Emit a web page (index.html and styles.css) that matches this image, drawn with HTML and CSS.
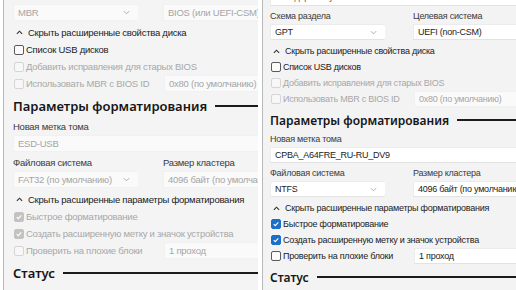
FILE: index.html
```html
<!DOCTYPE html>
<html lang="ru">

<head>
    <meta charset="UTF-8">
    <meta name="viewport" content="width=device-width, initial-scale=1.0">
    <title>Rufus</title>
    <link rel="stylesheet" href="styles.css">
</head>

<body>
    <div class="compare">
        <!-- left window: drive properties disabled -->
        <section class="panel panel-old">
            <div class="row fields">
                <div class="select off"><span>MBR</span><svg class="chev" viewBox="0 0 8 5"><path d="M1 1l3 3 3-3" /></svg></div>
                <div class="field off">BIOS (или UEFI-CSM)</div>
            </div>
            <div class="toggle"><svg class="up" viewBox="0 0 8 5"><path d="M1 4l3-3 3 3" /></svg>Скрыть расширенные свойства диска</div>
            <div class="check"><span class="box"></span>Список USB дисков</div>
            <div class="check off"><span class="box"></span>Добавить исправления для старых BIOS</div>
            <div class="row">
                <div class="check off"><span class="box"></span>Использовать MBR с BIOS ID</div>
                <div class="field off">0x80 (по умолчанию)</div>
            </div>

            <h2 class="section">Параметры форматирования</h2>
            <div class="label">Новая метка тома</div>
            <div class="field wide off">ESD-USB</div>
            <div class="row labels">
                <div class="label">Файловая система</div>
                <div class="label">Размер кластера</div>
            </div>
            <div class="row fields">
                <div class="select off"><span>FAT32 (по умолчанию)</span><svg class="chev" viewBox="0 0 8 5"><path d="M1 1l3 3 3-3" /></svg></div>
                <div class="field off">4096 байт (по умолчанию)</div>
            </div>
            <div class="toggle"><svg class="up" viewBox="0 0 8 5"><path d="M1 4l3-3 3 3" /></svg>Скрыть расширенные параметры форматирования</div>
            <div class="check off on"><span class="box"><svg viewBox="0 0 10 10"><path d="M2.2 5.2l1.9 1.9 3.8-4" /></svg></span>Быстрое форматирование</div>
            <div class="check off on"><span class="box"><svg viewBox="0 0 10 10"><path d="M2.2 5.2l1.9 1.9 3.8-4" /></svg></span>Создать расширенную метку и значок устройства</div>
            <div class="row">
                <div class="check off"><span class="box"></span>Проверить на плохие блоки</div>
                <div class="field off">1 проход</div>
            </div>

            <h2 class="section">Статус</h2>
        </section>

        <!-- right window: UEFI / NTFS -->
        <section class="panel panel-new">
            <div class="field wide top"><span>Стандартная установка Windows</span></div>
            <div class="row labels">
                <div class="label">Схема раздела</div>
                <div class="label">Целевая система</div>
            </div>
            <div class="row fields">
                <div class="select"><span>GPT</span><svg class="chev" viewBox="0 0 8 5"><path d="M1 1l3 3 3-3" /></svg></div>
                <div class="field">UEFI (non-CSM)</div>
            </div>
            <div class="toggle"><svg class="up" viewBox="0 0 8 5"><path d="M1 4l3-3 3 3" /></svg>Скрыть расширенные свойства диска</div>
            <div class="check"><span class="box"></span>Список USB дисков</div>
            <div class="check off"><span class="box"></span>Добавить исправления для старых BIOS</div>
            <div class="row">
                <div class="check off"><span class="box"></span>Использовать MBR с BIOS ID</div>
                <div class="field off">0x80 (по умолчанию)</div>
            </div>

            <h2 class="section">Параметры форматирования</h2>
            <div class="label">Новая метка тома</div>
            <div class="field wide">CPBA_A64FRE_RU-RU_DV9</div>
            <div class="row labels">
                <div class="label">Файловая система</div>
                <div class="label">Размер кластера</div>
            </div>
            <div class="row fields">
                <div class="select"><span>NTFS</span><svg class="chev" viewBox="0 0 8 5"><path d="M1 1l3 3 3-3" /></svg></div>
                <div class="field">4096 байт (по умолчанию)</div>
            </div>
            <div class="toggle"><svg class="up" viewBox="0 0 8 5"><path d="M1 4l3-3 3 3" /></svg>Скрыть расширенные параметры форматирования</div>
            <div class="check on"><span class="box"><svg viewBox="0 0 10 10"><path d="M2.2 5.2l1.9 1.9 3.8-4" /></svg></span>Быстрое форматирование</div>
            <div class="check on"><span class="box"><svg viewBox="0 0 10 10"><path d="M2.2 5.2l1.9 1.9 3.8-4" /></svg></span>Создать расширенную метку и значок устройства</div>
            <div class="row">
                <div class="check"><span class="box"></span>Проверить на плохие блоки</div>
                <div class="field">1 проход</div>
            </div>

            <h2 class="section">Статус</h2>
        </section>
    </div>
</body>

</html>
```

FILE: styles.css
```css
body {
    margin: 0;
    padding: 0;
    background: #ffffff;
    font-family: 'Liberation Sans', Arial, sans-serif;
    color: #1b1b1b;
    overflow: hidden;
}

.compare {
    display: flex;
    gap: 4px;
    height: 290px;
}

.panel {
    background: #f3f3f3;
    border-left: 1px solid #b9b9b9;
    overflow: hidden;
    display: flex;
    flex-direction: column;
    font-size: var(--fs);
    letter-spacing: -0.25px;
}

.panel > * {
    flex: none;
}

.panel-old {
    --fs: 9.5px;
    --hs: 13px;
    --row: 17px;
    --head: 24px;
    --col: 150px;
    --fw: 125px;
    width: 245px;
    margin-left: 3px;
    padding: 4px 0 0 9px;
    background: #f4f4f4;
}

.panel-new {
    --fs: 9px;
    --hs: 12px;
    --row: 16px;
    --head: 22px;
    --col: 143px;
    --fw: 115px;
    flex: 1;
    padding: 0 0 0 7px;
}

.row {
    display: flex;
    align-items: center;
}

.row > :first-child {
    width: var(--col);
    flex: none;
}

.row > .field {
    flex: 1;
}

.label {
    height: var(--row);
    line-height: var(--row);
    color: #3a3a3a;
}

.labels {
    margin-top: 2px;
}

.select,
.field {
    height: var(--row);
    box-sizing: border-box;
    display: flex;
    align-items: center;
    padding: 0 4px;
    background: #ffffff;
    border: 1px solid #ececec;
    border-bottom-color: #e2e2e2;
    border-right: none;
    white-space: nowrap;
    overflow: hidden;
}

.select {
    justify-content: space-between;
    border-radius: 2px;
}

.row > .select {
    width: var(--fw);
    margin-right: calc(var(--col) - var(--fw));
}

.field.top {
    margin-top: -3px;
    height: 9px;
    align-items: flex-end;
    border-top: none;
}

.field.top span {
    line-height: 9px;
    margin-bottom: 3px;
    color: #555;
}

.select.off,
.field.off {
    background: #fafafa;
    border-color: #f1f1f1;
    color: #a5a5a5;
}

.chev {
    width: 7px;
    height: 5px;
    margin-right: 4px;
    fill: none;
    stroke: #9a9a9a;
    stroke-width: 0.9;
}

.toggle {
    height: var(--row);
    margin-top: 3px;
    display: flex;
    align-items: center;
    gap: 5px;
    padding-left: 3px;
}

.up {
    width: 7px;
    height: 5px;
    fill: none;
    stroke: #333;
    stroke-width: 1.3;
}

.check {
    height: var(--row);
    display: flex;
    align-items: center;
    gap: 2px;
    padding-left: 1px;
    white-space: nowrap;
}

.check .box {
    width: 10px;
    height: 10px;
    box-sizing: border-box;
    border: 1px solid #5a5a5a;
    border-radius: 2px;
    background: #fbfbfb;
    display: flex;
    flex: none;
}

.check .box svg {
    width: 100%;
    height: 100%;
    fill: none;
    stroke: #ffffff;
    stroke-width: 1.4;
}

.check.on .box {
    background: #1a6fc9;
    border-color: #1a6fc9;
}

.check.off {
    color: #a8a8a8;
}

.check.off .box {
    border-color: #d5d5d5;
    background: #f7f7f7;
}

.check.off.on .box {
    background: #c3c3c3;
    border-color: #c3c3c3;
}

.section {
    height: var(--head);
    margin: 2px 0 0;
    display: flex;
    align-items: center;
    gap: 8px;
    font-family: 'Noto Sans', sans-serif;
    font-size: var(--hs);
    font-weight: 600;
    letter-spacing: 0;
    color: #161616;
    white-space: nowrap;
}

.section::after {
    content: "";
    flex: 1;
    height: 2px;
    background: #1b1b1b;
}
```
